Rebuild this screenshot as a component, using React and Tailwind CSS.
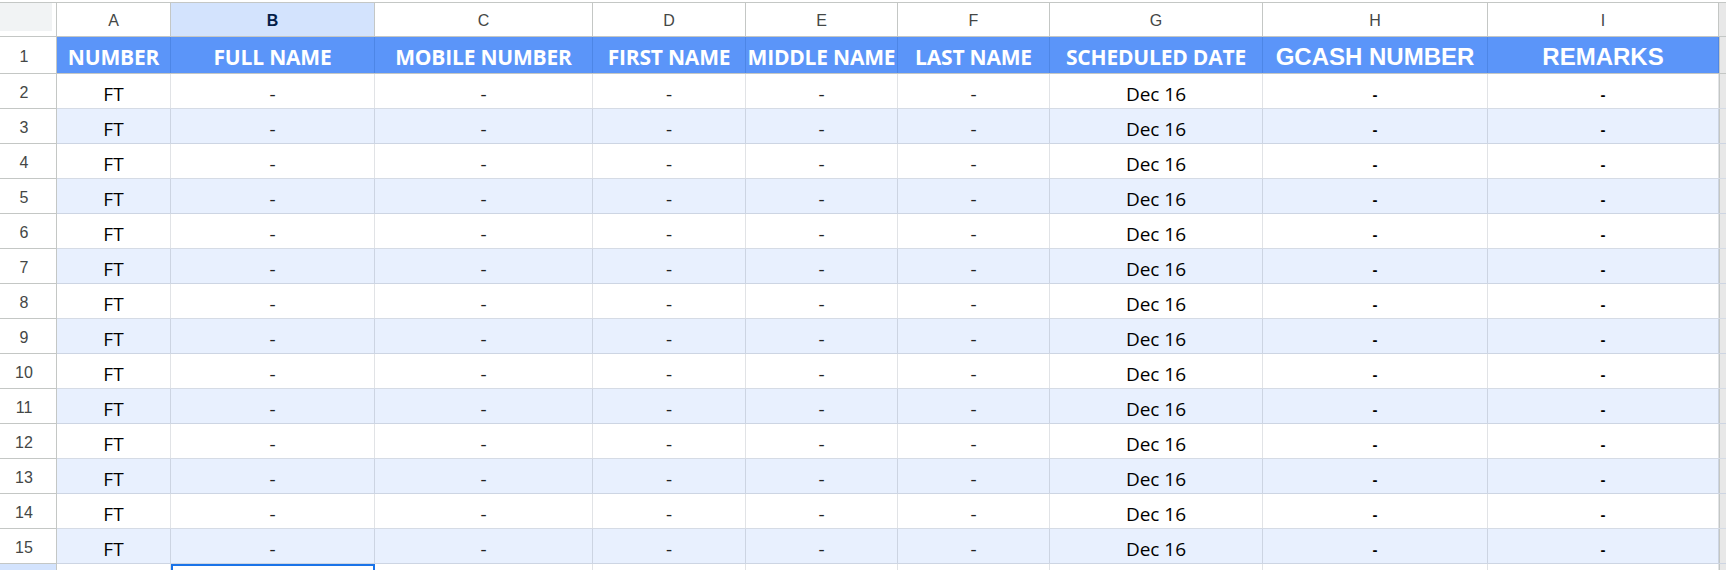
import React from "react";

const cols = [
  { key: "A", w: "w-[114px]", head: "NUMBER" },
  { key: "B", w: "w-[204px]", head: "FULL NAME" },
  { key: "C", w: "w-[218px]", head: "MOBILE NUMBER" },
  { key: "D", w: "w-[153px]", head: "FIRST NAME" },
  { key: "E", w: "w-[152px]", head: "MIDDLE NAME" },
  { key: "F", w: "w-[152px]", head: "LAST NAME" },
  { key: "G", w: "w-[213px]", head: "SCHEDULED DATE" },
  { key: "H", w: "w-[225px]", head: "GCASH NUMBER", arial: true },
  { key: "I", w: "w-[231px]", head: "REMARKS", arial: true },
];

const dataRows = Array.from({ length: 14 }, (_, i) => i + 2);

function cellText(key) {
  if (key === "A") return "FT";
  if (key === "G") return "Dec 16";
  return "-";
}

export default function App() {
  return (
    <div className="w-[1726px] h-[570px] overflow-hidden bg-white">
      <div className="h-[2px] bg-white" />
      {/* Column letters */}
      <div className="flex h-[35px] border-t border-b border-[#c4c7c5]">
        <div className="w-[57px] shrink-0 border-r border-[#c4c7c5] bg-white">
          <div className="w-[52px] h-[28px] bg-[#f1f3f4]" />
        </div>
        {cols.map((c) => (
          <div
            key={c.key}
            className={`${c.w} shrink-0 border-r border-[#c4c7c5] flex items-center justify-center pt-[2px] font-['Liberation_Sans',Arial,sans-serif] text-[16px] ${
              c.key === "B" ? "bg-[#d3e3fd] text-[#041e49] font-bold" : "bg-white text-[#444746]"
            }`}
          >
            {c.key}
          </div>
        ))}
        <div className="flex-1 bg-[#e8e8e8]" />
      </div>
      {/* Row 1 header */}
      <div className="flex h-[37px] border-b border-[#c4c7c5]">
        <div className="w-[57px] shrink-0 border-r border-[#c4c7c5] bg-white flex items-center justify-center pr-[8px] pt-[3px] font-['Liberation_Sans',Arial,sans-serif] text-[16px] text-[#444746]">
          1
        </div>
        {cols.map((c) => (
          <div
            key={c.key}
            className={`${c.w} shrink-0 border-r border-[#4d86e6] bg-[#5b95f9] text-white font-bold whitespace-nowrap overflow-hidden flex items-center justify-center ${
              c.arial
                ? "font-['Liberation_Sans',Arial,sans-serif] text-[24px] pt-[4px]"
                : "font-['Open_Sans',sans-serif] text-[21px] leading-[29px] pt-[4px] tracking-[-0.2px]"
            }`}
          >
            {c.head}
          </div>
        ))}
        <div className="flex-1 bg-[#e8e8e8] border-l border-[#c4c7c5]" />
      </div>
      {/* Data rows */}
      {dataRows.map((r) => {
        const band = r % 2 === 1;
        return (
          <div key={r} className={`flex h-[35px] border-b ${band ? "border-[#cdd5e3]" : "border-[#d5dbe5]"}`}>
            <div className="w-[57px] shrink-0 border-r border-b border-[#c4c7c5] -mb-px bg-white flex items-center justify-center pr-[8px] pt-[3px] font-['Liberation_Sans',Arial,sans-serif] text-[16px] text-[#444746]">
              {r}
            </div>
            {cols.map((c) => (
              <div
                key={c.key}
                className={`${c.w} shrink-0 border-r ${band ? "bg-[#e8f0fe] border-[#ccd4e2]" : "bg-white border-[#e1e3e6]"} flex items-end justify-center ${
                  c.arial
                    ? "font-['Liberation_Sans',Arial,sans-serif] font-bold text-[15px] text-black pb-[2px]"
                    : `font-['Open_Sans',sans-serif] text-[19px] leading-[26px] pb-[1px] ${c.key === "A" || c.key === "G" ? "text-black" : "text-[#222]"}`
                }`}
              >
                {cellText(c.key)}
              </div>
            ))}
            <div className="flex-1 bg-[#e8e8e8] border-l border-[#c4c7c5]" />
          </div>
        );
      })}
      {/* Row 16 partial */}
      <div className="flex h-[35px]">
        <div className="w-[57px] shrink-0 border-r border-[#c4c7c5] bg-[#d3e3fd]" />
        {cols.map((c) => (
          <div
            key={c.key}
            className={`${c.w} shrink-0 ${c.key === "B" ? "border-2 border-[#1a73e8] bg-white" : "border-r border-[#e1e3e6] bg-white"}`}
          />
        ))}
        <div className="flex-1 bg-[#e8e8e8] border-l border-[#c4c7c5]" />
      </div>
    </div>
  );
}
